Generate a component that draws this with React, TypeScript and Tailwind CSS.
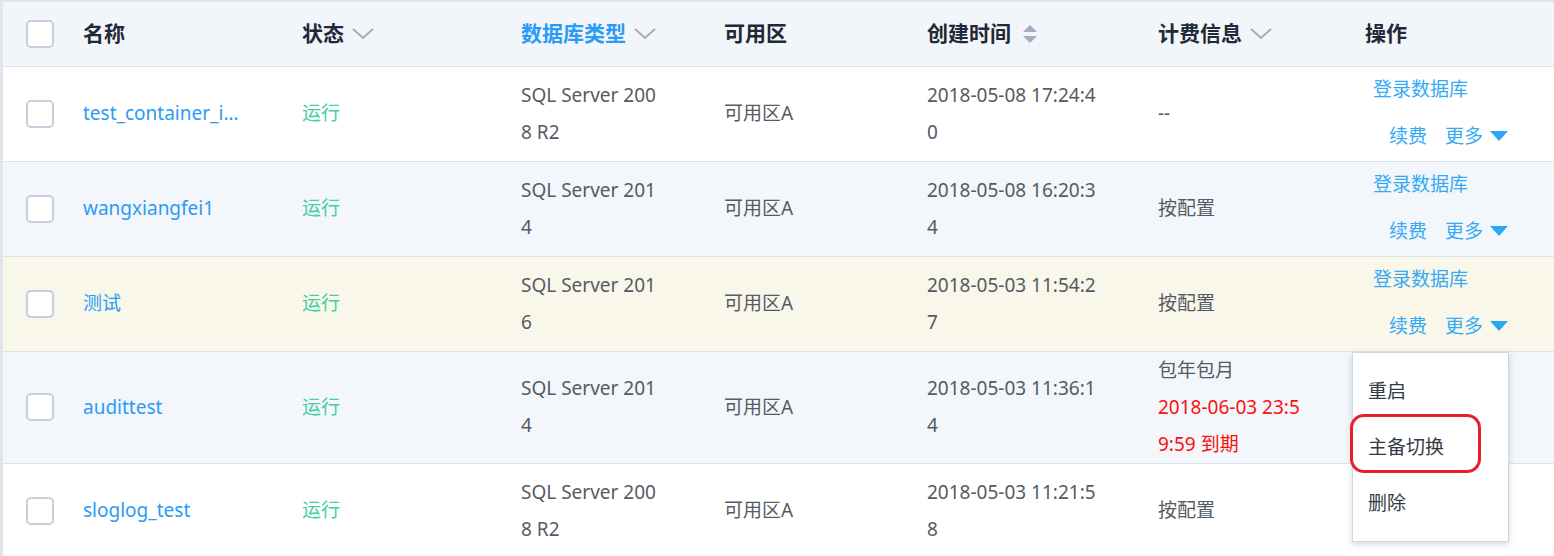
import { ReactNode } from "react";

type Row = {
  name: string;
  type: string[];
  zone: string;
  created: string[];
  billing: ReactNode;
  bg: string;
};

const rows: Row[] = [
  {
    name: "test_container_instance",
    type: ["SQL Server 200", "8 R2"],
    zone: "可用区A",
    created: ["2018-05-08 17:24:4", "0"],
    billing: <span>--</span>,
    bg: "bg-white",
  },
  {
    name: "wangxiangfei1",
    type: ["SQL Server 201", "4"],
    zone: "可用区A",
    created: ["2018-05-08 16:20:3", "4"],
    billing: <span>按配置</span>,
    bg: "bg-[#f3f6fa]",
  },
  {
    name: "测试",
    type: ["SQL Server 201", "6"],
    zone: "可用区A",
    created: ["2018-05-03 11:54:2", "7"],
    billing: <span>按配置</span>,
    bg: "bg-[#f8f7ea]",
  },
  {
    name: "audittest",
    type: ["SQL Server 201", "4"],
    zone: "可用区A",
    created: ["2018-05-03 11:36:1", "4"],
    billing: (
      <>
        <div>包年包月</div>
        <div className="text-[#fa1010]">2018-06-03 23:5</div>
        <div className="text-[#fa1010]">9:59 到期</div>
      </>
    ),
    bg: "bg-[#f3f6fa]",
  },
  {
    name: "sloglog_test",
    type: ["SQL Server 200", "8 R2"],
    zone: "可用区A",
    created: ["2018-05-03 11:21:5", "8"],
    billing: <span>按配置</span>,
    bg: "bg-white",
  },
];

function Chevron() {
  return (
    <svg width="22" height="12" viewBox="0 0 22 12" className="ml-2 inline-block">
      <path d="M1 1 L11 10 L21 1" fill="none" stroke="#a2adbd" strokeWidth="2" />
    </svg>
  );
}

function SortIcon() {
  return (
    <svg width="14" height="18" viewBox="0 0 14 18" className="ml-3 inline-block">
      <path d="M7 0 L14 7 L0 7 Z" fill="#a2adbd" />
      <path d="M7 18 L14 11 L0 11 Z" fill="#a2adbd" />
    </svg>
  );
}

function Checkbox() {
  return <div className="h-[28px] w-[28px] rounded-[5px] border-2 border-[#c6cfdb] bg-white" />;
}

function Lines({ lines }: { lines: string[] }) {
  return (
    <>
      {lines.map((l) => (
        <div key={l} className="whitespace-nowrap">
          {l}
        </div>
      ))}
    </>
  );
}

export default function App() {
  return (
    <div
      className="relative h-[556px] w-[1554px] overflow-hidden border-l-[3px] border-t-2 border-[#e1e6ed] bg-white"
      style={{ fontFamily: '"Noto Sans", "Noto Sans CJK SC", sans-serif' }}
    >
      <table className="w-[1551px] table-fixed border-collapse">
        <colgroup>
          <col className="w-[60px]" />
          <col className="w-[219px]" />
          <col className="w-[219px]" />
          <col className="w-[203px]" />
          <col className="w-[203px]" />
          <col className="w-[231px]" />
          <col className="w-[207px]" />
          <col className="w-[209px]" />
        </colgroup>
        <thead>
          <tr className="h-[64px] border-b border-[#dde3ea] bg-[#f2f5f9] text-left text-[21px] font-bold text-[#1f2937]">
            <th className="pl-[23px]">
              <Checkbox />
            </th>
            <th className="pl-5">名称</th>
            <th className="pl-5">
              <span className="inline-flex items-center">
                状态
                <Chevron />
              </span>
            </th>
            <th className="pl-5 text-[#2b9cf6]">
              <span className="inline-flex items-center">
                数据库类型
                <Chevron />
              </span>
            </th>
            <th className="pl-5">可用区</th>
            <th className="pl-5">
              <span className="inline-flex items-center">
                创建时间
                <SortIcon />
              </span>
            </th>
            <th className="pl-5">
              <span className="inline-flex items-center">
                计费信息
                <Chevron />
              </span>
            </th>
            <th className="pl-5">操作</th>
          </tr>
        </thead>
        <tbody className="text-[19px] leading-[37px] text-[#555b63]">
          {rows.map((r) => (
            <tr key={r.name} className={`h-[95px] border-b border-[#dde3ea] ${r.bg}`}>
              <td className="pl-[23px]">
                <Checkbox />
              </td>
              <td className="pl-5">
                <div className="w-[158px] truncate text-[#2a9bf4]">{r.name}</div>
              </td>
              <td className="pl-5 text-[#45cfa2]">运行</td>
              <td className="pl-5">
                <Lines lines={r.type} />
              </td>
              <td className="pl-5">{r.zone}</td>
              <td className="pl-5">
                <Lines lines={r.created} />
              </td>
              <td className="pl-5">{r.billing}</td>
              <td className="pl-7 text-[#36a9f4]">
                <div className="leading-[44px]">登录数据库</div>
                <div className="flex items-center gap-[18px] pl-4 leading-[50px]">
                  <span>续费</span>
                  <span className="inline-flex items-center gap-[7px]">
                    更多
                    <svg width="18" height="10" viewBox="0 0 18 10">
                      <path d="M0 0 L18 0 L9 10 Z" fill="#2aa7f5" />
                    </svg>
                  </span>
                </div>
              </td>
            </tr>
          ))}
        </tbody>
      </table>

      {/* dropdown for 更多 */}
      <div className="absolute left-[1349px] top-[350px] w-[157px] border border-[#cfd8e2] bg-white py-[10px] text-[19px] text-[#333a44] shadow-[0_2px_6px_rgba(120,140,170,0.35)]">
        <div className="flex h-[56px] items-center pl-[15px]">重启</div>
        <div className="relative flex h-[56px] items-center pl-[15px]">
          主备切换
          <div className="absolute -left-[3px] top-[-5px] h-[59px] w-[131px] rounded-[14px] border-[3px] border-[#e8202a]" />
        </div>
        <div className="flex h-[56px] items-center pl-[15px]">删除</div>
      </div>
    </div>
  );
}
